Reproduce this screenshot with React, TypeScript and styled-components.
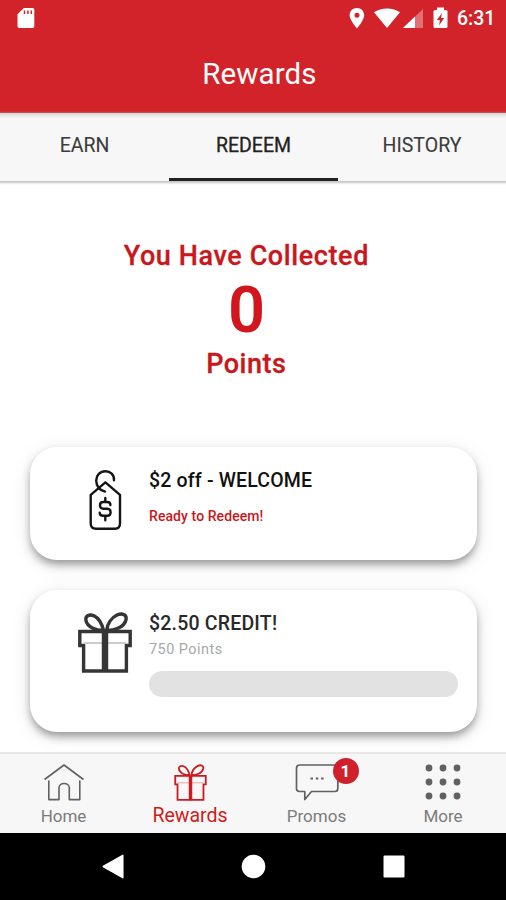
import React from "react";
import styled, { createGlobalStyle } from "styled-components";

const GlobalStyle = createGlobalStyle`
  * { box-sizing: border-box; }
  body { margin: 0; background: #fff; font-family: Roboto, "Liberation Sans", sans-serif; }
  svg { display: block; flex: none; }
`;

const Screen = styled.div`
  display: flex;
  flex-direction: column;
  width: 506px;
  height: 900px;
  overflow: hidden;
  background: #fff;
`;

const Header = styled.header`
  flex: none;
  height: 113px;
  background: #d2232a;
  color: #fff;
  border-bottom: 1px solid #b81d20;
`;

const StatusBar = styled.div`
  display: flex;
  align-items: center;
  height: 36px;
  padding: 0 10px 0 17px;
`;

const StatusIcons = styled.div`
  display: flex;
  align-items: center;
  margin-left: auto;
`;

const Clock = styled.span`
  width: 39px;
  margin-left: 9px;
  font-size: 19.5px;
  font-weight: 500;
  line-height: 37px;
  white-space: nowrap;
`;

const Title = styled.h1`
  margin: 0;
  padding-left: 13px;
  text-align: center;
  font-size: 29.5px;
  font-weight: 400;
  line-height: 77px;
  letter-spacing: 0.1px;
`;

const Tabs = styled.nav`
  position: relative;
  display: grid;
  grid-template-columns: 169px 169px 168px;
  flex: none;
  height: 68px;
  background: linear-gradient(#d5d5d5, #f7f7f7 5px);
  box-shadow: 0 1px 2px 1px #c4c4c4;
`;

const Tab = styled.div<{ $active?: boolean }>`
  text-align: center;
  height: 68px;
  border-bottom: 3px solid ${(p) => (p.$active ? "#222" : "transparent")};
  color: ${(p) => (p.$active ? "#222" : "#3c3c3c")};
  font-size: 19.5px;
  font-weight: 400;
  line-height: 66px;
  -webkit-text-stroke: ${(p) => (p.$active ? "0.3px #222" : "0.1px #3c3c3c")};
`;

const Content = styled.main`
  flex: 1;
  min-height: 0;
  display: flex;
  flex-direction: column;
  align-items: center;
  padding-top: 56px;
  overflow: hidden;
  color: #c9171b;
`;

const Heading = styled.div<{ $spacing: number }>`
  font-size: 27px;
  font-weight: 500;
  line-height: 38px;
  letter-spacing: ${(p) => p.$spacing}px;
  margin-right: ${(p) => 14 - p.$spacing}px;
  -webkit-text-stroke: 0.3px #c9171b;
`;

const Score = styled.div`
  color: #d2161f;
  font-size: 65px;
  font-weight: 600;
  line-height: 70px;
  margin-right: 13px;
`;

const Cards = styled.section`
  display: flex;
  flex-direction: column;
  align-self: stretch;
  gap: 30px;
  padding: 0 29px 0 30px;
  margin-top: 64px;
`;

const Card = styled.article<{ $height: number }>`
  display: flex;
  flex: none;
  height: ${(p) => p.$height}px;
  border-radius: 27px;
  background: #fff;
  box-shadow: 0 5px 8px -1px rgba(0, 0, 0, 0.38), 0 4px 20px rgba(0, 0, 0, 0.1);
`;

const CardIcon = styled.div`
  display: flex;
  justify-content: flex-end;
  width: 119px;
  padding-top: 22px;
`;

const CardBody = styled.div`
  flex: 1;
  padding: 20px 19px 0 0;
`;

const CardTitle = styled.div<{ $spacing: number; $color: string }>`
  color: ${(p) => p.$color};
  font-size: 19.5px;
  font-weight: 500;
  line-height: 27px;
  letter-spacing: ${(p) => p.$spacing}px;
`;

const Ready = styled.div`
  margin-top: 9px;
  color: #c9171b;
  font-size: 14px;
  font-weight: 500;
  line-height: 26px;
  letter-spacing: 0.08px;
`;

const Cost = styled.div`
  color: #a8a8a8;
  font-size: 14.5px;
  line-height: 25px;
  letter-spacing: 0.45px;
`;

const Progress = styled.div`
  height: 26px;
  margin-top: 9px;
  border-radius: 13px;
  background: #e2e2e2;
`;

const BottomNav = styled.nav`
  position: relative;
  display: grid;
  grid-template-columns: 127px 126px 127px 126px;
  flex: none;
  height: 81px;
  border-top: 2px solid #e8e8e8;
  background: #f7f7f7;
`;

const NavItem = styled.div<{ $active?: boolean }>`
  display: flex;
  flex-direction: column;
  align-items: center;
  color: ${(p) => (p.$active ? "#cf1b20" : "#616161")};
`;

const NavIcon = styled.div`
  position: relative;
  display: flex;
  align-items: center;
  height: 49px;
  padding-top: 7px;
`;

const NavLabel = styled.span<{ $active?: boolean }>`
  color: ${(p) => (p.$active ? "#cf1b20" : "#7b7b7b")};
  font-size: ${(p) => (p.$active ? 19.5 : 17)}px;
  line-height: 26px;
`;

const Badge = styled.span`
  position: absolute;
  left: 38px;
  top: 4px;
  width: 26px;
  height: 26px;
  border-radius: 50%;
  background: #cf202b;
  color: #fff;
  font-size: 17px;
  font-weight: 700;
  line-height: 26px;
  text-align: center;
`;

const SystemBar = styled.footer`
  display: flex;
  justify-content: space-between;
  flex: none;
  height: 67px;
  padding: 21px 101px 0 102px;
  background: #000;
`;

const SdCard = () => (
  <svg width="18" height="22" viewBox="0 0 18 22">
    <path fill="#fff" d="M6.8 1H15.5Q17.3 1 17.3 2.8V19Q17.3 21 15.5 21H2.3Q.5 21 .5 19V7.3Z" />
    <path stroke="#d2232a" strokeWidth="1.5" d="M7.5 3.4V7M10.9 3.4V7M14.3 3.4V7" />
  </svg>
);

const Pin = () => (
  <svg width="16" height="22" viewBox="0 0 16 22">
    <path fill="#fff" fillRule="evenodd" d="M8 1C3.7 1 .6 4.2.6 8.2.6 13 8 21.4 8 21.4s7.2-8.4 7.2-13.2C15.200 4.200 12.200 1 8 1Zm0 4.700a2.500 2.500 0 1 1 0 5 2.500 2.500 0 0 1 0-5Z" />
  </svg>
);

const Wifi = styled.svg`
  margin-left: 8px;
`;
const Signal = styled.svg`
  margin-left: 2px;
`;
const Battery = styled.svg`
  margin-left: 10px;
`;

const Tag = () => (
  <svg width="37" height="64" viewBox="0 0 37 64" fill="none" stroke="#151515" strokeWidth="2.400" strokeLinejoin="round" strokeLinecap="round">
    <path d="M18.400 13.300 33 25.800V54.500Q33 59.700 28 59.700H9Q3.700 59.700 3.700 54.500V25.800Z" />
    <path d="M27 11.300C27.300 5.800 23.400 2.200 18.500 2.200 13 2.200 9.200 6.300 9.200 11.500c0 5.700 3.800 10.300 8.700 11" />
    <path d="M23.400 36V35.900Q23.400 33 20.200 33H16.200Q13 33 13 36.200T16.200 39.700H20.300Q23.600 39.700 23.600 43.200T20.300 46.800H16Q12.700 46.800 12.700 43.800M18.300 29V32.500M18.300 47.500V51.200" />
  </svg>
);

const Gift = ({ width, height, weight }: { width: number; height: number; weight: number }) => (
  <svg width={width} height={height} viewBox="0 0 54 61" fill="none" stroke="currentColor" strokeWidth={weight}>
    <path d="M5.600 33.500H1.800V19.500H52.200V33.500H48.400M5.600 32V59H48.400V32" />
    <path strokeWidth="1.200" opacity=".5" d="M5.600 31H48.400" />
    <path strokeWidth={weight * 1.9} d="M27 18.500V60" />
    <path d="M25.500 18.500C18 18.600 9 15 8 8.600 7 3.500 11.500 2 16 3.800 21 6.300 24 12 25.500 18.500ZM28.500 18.500C36 18.600 46.500 15.500 48 7.600 49 2.300 44 1 39 3 33.500 5.600 29.500 12 28.500 18.500Z" />
  </svg>
);

const DarkIcon = styled.div`
  color: #353535;
  padding-right: 17px;
`;

const TagWrap = styled.div`
  padding-right: 25px;
`;

const Home = () => (
  <svg width="42" height="40" viewBox="0 0 42 40" fill="none" stroke="currentColor" strokeWidth="1.600" strokeLinejoin="round">
    <path d="M1.500 17.500 21 3 40.500 17.500M5.800 18.500V37.600H16V26C16 20 26.300 20 26.300 26V37.600H36.800V18.500" />
  </svg>
);

const Chat = () => (
  <svg width="44" height="40" viewBox="0 0 44 40" fill="none" stroke="currentColor" strokeWidth="1.700" strokeLinejoin="round">
    <path d="M5 3H40Q42.800 3 42.800 6V26.500Q42.800 29.500 40 29.500H16.500L9.800 37.500V29.500H4.500Q1.500 29.500 1.500 26.500V6Q1.500 3 5 3Z" />
    <path strokeWidth="2.200" d="M15.500 16.500h2.500M20.800 16.500h2.500M26.100 16.500h2.500" />
  </svg>
);

const Dots = () => (
  <svg width="38" height="38" viewBox="0 0 38 38" fill="currentColor">
    {[5, 19, 33].map((y) => [5, 19, 33].map((x) => <circle key={`${x}-${y}`} cx={x} cy={y} r="3.400" />))}
  </svg>
);

export default function App() {
  return (
    <Screen>
      <GlobalStyle />
      <Header>
        <StatusBar>
          <SdCard />
          <StatusIcons>
            <Pin />
            <Wifi width="28" height="22" viewBox="0 0 28 22">
              <path fill="#fff" d="M14 21 1 5.200C8 .1 20 .1 27 5.200Z" />
            </Wifi>
            <Signal width="20" height="22" viewBox="0 0 20 22">
              <path fill="#fff" opacity=".35" d="M20 2V21H0Z" />
              <path fill="#fff" d="M12 9.500V21H0Z" />
            </Signal>
            <Battery width="15" height="22" viewBox="0 0 15 22">
              <path fill="#fff" d="M4 .5h7v2.500h2q1.500 0 1.500 1.500v15q0 1.500-1.500 1.500H2q-1.500 0-1.500-1.500v-15Q.5 3 2 3h2Z" />
              <path fill="#d2232a" d="M9 6 3.800 13H7L6 18.500 11.200 11H8Z" />
            </Battery>
            <Clock>6:31</Clock>
          </StatusIcons>
        </StatusBar>
        <Title>Rewards</Title>
      </Header>
      <Tabs>
        <Tab>EARN</Tab>
        <Tab $active>REDEEM</Tab>
        <Tab>HISTORY</Tab>
      </Tabs>
      <Content>
        <Heading $spacing={0.6}>You Have Collected</Heading>
        <Score>0</Score>
        <Heading $spacing={0.5}>Points</Heading>
        <Cards>
          <Card $height={113}>
            <CardIcon>
              <TagWrap>
                <Tag />
              </TagWrap>
            </CardIcon>
            <CardBody>
              <CardTitle $spacing={0.17} $color="#111">$2 off - WELCOME</CardTitle>
              <Ready>Ready to Redeem!</Ready>
            </CardBody>
          </Card>
          <Card $height={142}>
            <CardIcon>
              <DarkIcon>
                <Gift width={54} height={61} weight={3.4} />
              </DarkIcon>
            </CardIcon>
            <CardBody>
              <CardTitle $spacing={0.2} $color="#292929">$2.50 CREDIT!</CardTitle>
              <Cost>750 Points</Cost>
              <Progress />
            </CardBody>
          </Card>
        </Cards>
      </Content>
      <BottomNav>
        <NavItem>
          <NavIcon><Home /></NavIcon>
          <NavLabel>Home</NavLabel>
        </NavItem>
        <NavItem $active>
          <NavIcon><Gift width={33} height={37} weight={3} /></NavIcon>
          <NavLabel $active>Rewards</NavLabel>
        </NavItem>
        <NavItem>
          <NavIcon>
            <Chat />
            <Badge>1</Badge>
          </NavIcon>
          <NavLabel>Promos</NavLabel>
        </NavItem>
        <NavItem>
          <NavIcon><Dots /></NavIcon>
          <NavLabel>More</NavLabel>
        </NavItem>
      </BottomNav>
      <SystemBar>
        <svg width="22" height="25" viewBox="0 0 22 25">
          <path fill="#fff" stroke="#fff" strokeWidth="1.500" strokeLinejoin="round" d="M1.200 12.500 20.800 1.300V23.700Z" />
        </svg>
        <svg width="25" height="25" viewBox="0 0 25 25">
          <circle fill="#fff" cx="12.500" cy="12.500" r="11.800" />
        </svg>
        <svg width="22" height="25" viewBox="0 0 22 25">
          <rect fill="#fff" x="0.500" y="1.500" width="21" height="22" rx="1.200" />
        </svg>
      </SystemBar>
    </Screen>
  );
}
